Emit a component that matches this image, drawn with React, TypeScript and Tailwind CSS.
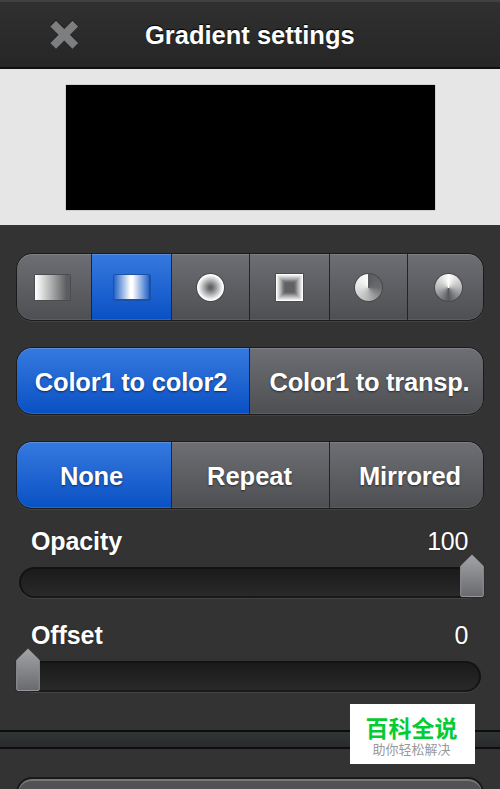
import clsx from 'clsx';
import type { ReactNode } from 'react';

type Segment = {
  id: string;
  content: ReactNode;
  className: string;
};

const gradientTypes: Segment[] = [
  {
    id: 'linear',
    className: 'w-[74px] pr-[3px]',
    content: (
      <div className="w-[37px] h-[27px] rounded-[2px] bg-[#4b4c4f] p-px">
        <div className="w-full h-full bg-[linear-gradient(90deg,#ffffff,#e8e8e8_15%,#5c5d60_90%)]" />
      </div>
    ),
  },
  {
    id: 'bilinear',
    className: 'w-[80px]',
    content: (
      <div className="w-[38px] h-[27px] rounded-[2px] bg-[#1b52a6] p-[1.5px]">
        <div className="w-full h-full bg-[linear-gradient(90deg,#2364c8,#ffffff_47%,#ffffff_53%,#2364c8)]" />
      </div>
    ),
  },
  {
    id: 'radial',
    className: 'w-[78px]',
    content: (
      <div className="w-[29px] h-[29px] rounded-full bg-[#48494c] p-px">
        <div className="w-full h-full rounded-full bg-[radial-gradient(circle,#5c5d60_0%,#6c6d70_12%,#ffffff_66%)]" />
      </div>
    ),
  },
  {
    id: 'square',
    className: 'w-[80px]',
    content: <SquareIcon />,
  },
  {
    id: 'conic',
    className: 'w-[78px]',
    content: (
      <div className="w-[29px] h-[29px] rounded-full bg-[#48494c] p-px">
        <div className="w-full h-full rounded-full bg-[conic-gradient(#595b5e,#6b6c6e_25%,#b4b4b5_50%,#e2e2e2_75%,#ffffff)]" />
      </div>
    ),
  },
  {
    id: 'conic-mirror',
    className: 'w-[76px] pl-[5px]',
    content: (
      <div className="w-[29px] h-[29px] rounded-full bg-[#48494c] p-px">
        <div className="w-full h-full rounded-full bg-[conic-gradient(#ffffff,#b9b9ba_25%,#58595c_50%,#b9b9ba_75%,#ffffff)]" />
      </div>
    ),
  },
];

const colorModes: Segment[] = [
  { id: 'color2', className: 'w-[232px] pr-[4px] tracking-[-0.2px]', content: 'Color1 to color2' },
  { id: 'transp', className: 'w-[234px] pl-[6px] tracking-[-0.25px]', content: 'Color1 to transp.' },
];

const repeatModes: Segment[] = [
  { id: 'none', className: 'w-[154px] pr-[5px] tracking-[-0.2px]', content: 'None' },
  { id: 'repeat', className: 'w-[158px] pr-[2px]', content: 'Repeat' },
  { id: 'mirrored', className: 'w-[154px] pl-[7px] tracking-[-0.2px]', content: 'Mirrored' },
];

function SquareIcon() {
  const steps = ['#ffffff', '#e6e6e6', '#cfcfcf', '#b8b8b9', '#a0a1a2', '#88898b', '#727376', '#606164'];
  return (
    <svg width="29" height="29" viewBox="0 0 29 29">
      <rect width="29" height="29" rx="1" fill="#4b4c4f" />
      {steps.map((fill, i) => (
        <rect key={fill} x={1 + i * 1.2} y={1 + i * 1.2} width={27 - i * 2.4} height={27 - i * 2.4} fill={fill} />
      ))}
    </svg>
  );
}

function SegmentedControl({ segments, active }: { segments: Segment[]; active: string }) {
  return (
    <div className="mx-4 h-[68px] flex rounded-[16px] border border-[#1b1b1b] overflow-hidden shadow-[0_1px_0_#414141]">
      {segments.map((segment, i) => (
        <button
          key={segment.id}
          className={clsx(
            'h-full shrink-0 flex items-center justify-center text-white text-[25.5px] font-bold whitespace-nowrap',
            '[text-shadow:0_1px_2px_rgba(0,0,0,0.55)]',
            segment.className,
            typeof segment.content === 'string' && 'pt-[2px]',
            i > 0 && 'border-l border-[#242424]',
            i === 0 && 'rounded-l-[15px]',
            i === segments.length - 1 && 'rounded-r-[15px]',
            segment.id === active
              ? 'bg-linear-to-b from-[#3579df] to-[#0750c4] shadow-[inset_0_1px_0_#5b8fdd,inset_0_-1px_0_#2e68bd]'
              : 'bg-linear-to-b from-[#6d6f74] to-[#4e4f52] shadow-[inset_0_1px_0_#7e8084,inset_0_-1px_0_#5c5d60]'
          )}
        >
          {segment.content}
        </button>
      ))}
    </div>
  );
}

function Thumb({ id, className }: { id: string; className: string }) {
  return (
    <svg className={clsx('absolute -top-[16px]', className)} width="26" height="46" viewBox="0 0 26 46">
      <defs>
        <linearGradient id={id} x1="0" y1="0" x2="0" y2="1">
          <stop offset="0" stopColor="#a3a4a7" />
          <stop offset="1" stopColor="#696a6e" />
        </linearGradient>
      </defs>
      <path d="M13 .8 L25.3 13 V43 Q25.3 44.6 23.5 44.6 H2.5 Q.7 44.6 .7 43 V13 Z" fill="#222222" />
      <path
        d="M13 1.8 L24.3 13 V42.3 Q24.3 43.5 23 43.5 H3 Q1.7 43.5 1.7 42.3 V13 Z"
        fill={`url(#${id})`}
        stroke="#96979a"
        strokeWidth="1"
      />
    </svg>
  );
}

function Slider({ label, value }: { label: string; value: number }) {
  return (
    <div className="h-[94px] pt-[15px]">
      <div className="flex justify-between pl-[31px] pr-[32px] h-[34px] leading-[35px] text-[25px] text-white [text-shadow:0_0_2px_rgba(0,0,0,0.4)]">
        <span className="font-bold tracking-[-0.1px]">{label}</span>
        <span className="tracking-[-0.3px]">{value}</span>
      </div>
      <div className="relative mt-[9px] mx-[19px] h-[31px] rounded-full border-2 border-[#131313] border-b-[#181818] bg-linear-to-b from-[#1b1b1b] to-[#292929] shadow-[0_1px_0_#444444]">
        <Thumb id={`thumb-${label}`} className={value > 0 ? '-right-[6px]' : '-left-[6px]'} />
      </div>
    </div>
  );
}

export default function App() {
  return (
    <div className="w-[500px] h-[789px] relative overflow-hidden bg-[#333333] font-['Liberation_Sans',Arial,sans-serif]">
      <header className="h-[69px] flex items-center border-t-2 border-t-[#414141] border-b-2 border-b-[#101010] bg-linear-to-b from-[#303030] to-[#262626]">
        <button className="ml-[50px] w-[29px]" aria-label="Close">
          <svg width="29" height="29" viewBox="0 0 29 29" className="drop-shadow-[0_-1px_0_#1a1a1a]">
            <path d="M3.2 3.7 L25.3 25.8 M25.3 3.7 L3.2 25.8" stroke="#7d7e80" strokeWidth="8" />
          </svg>
        </button>
        <h1 className="mt-[2px] ml-[66px] text-white text-[25.5px] font-bold whitespace-nowrap [text-shadow:0_-1px_1px_#000]">
          Gradient settings
        </h1>
      </header>

      <div className="h-[156px] pt-[16px] bg-[#e6e6e6]">
        <div className="ml-[66px] w-[369px] h-[125px] bg-black shadow-[0_0_1px_#606060]" />
      </div>

      <div className="pt-[28px] flex flex-col gap-[26px]">
        <SegmentedControl segments={gradientTypes} active="bilinear" />
        <SegmentedControl segments={colorModes} active="color2" />
        <SegmentedControl segments={repeatModes} active="none" />
      </div>

      <Slider label="Opacity" value={100} />
      <Slider label="Offset" value={0} />

      <div className="mt-[33px] h-[19px] border-y-2 border-y-[#0d0d0d] bg-linear-to-b from-[#323536] to-[#292b2b]" />

      <div className="mt-[28px] mx-4 h-[68px] rounded-[16px] border-2 border-[#191919] bg-[#515254] shadow-[inset_0_2px_0_#77787a]" />

      <div className="absolute left-[350px] top-[704px] w-[125px] h-[60px] pr-[2px] bg-white flex flex-col items-center font-['Noto_Sans_CJK_SC',sans-serif]">
        <div className="mt-[9px] h-[29px] leading-[29px] text-[23px] font-bold text-[#06cc33] whitespace-nowrap">百科全说</div>
        <div className="h-[14px] leading-[14px] text-[13px] text-[#999999] whitespace-nowrap">助你轻松解决</div>
      </div>
    </div>
  );
}
